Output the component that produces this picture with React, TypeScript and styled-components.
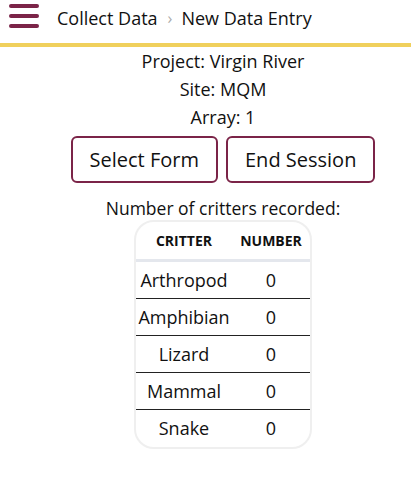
import styled, { createGlobalStyle } from "styled-components";

const GlobalStyle = createGlobalStyle`
  body {
    margin: 0;
    font-family: "Open Sans", "Noto Sans", sans-serif;
    color: #111;
    background: #fff;
  }
`;

const critters = [
  { name: "Arthropod", count: 0 },
  { name: "Amphibian", count: 0 },
  { name: "Lizard", count: 0 },
  { name: "Mammal", count: 0 },
  { name: "Snake", count: 0 },
];

export default function App() {
  return (
    <>
      <GlobalStyle />
      <Header>
        <MenuButton aria-label="menu">
          <span />
          <span />
          <span />
        </MenuButton>
        <Crumbs>
          <span>Collect Data</span>
          <Chevron>›</Chevron>
          <span>New Data Entry</span>
        </Crumbs>
      </Header>
      <Main>
        <InfoLine>Project: Virgin River</InfoLine>
        <InfoLine>Site: MQM</InfoLine>
        <InfoLine>Array: 1</InfoLine>
        <ButtonRow>
          <OutlineButton>Select Form</OutlineButton>
          <OutlineButton>End Session</OutlineButton>
        </ButtonRow>
        <Caption>Number of critters recorded:</Caption>
        <TableCard>
          <Table>
            <colgroup>
              <col style={{ width: 96 }} />
              <col />
            </colgroup>
            <thead>
              <tr>
                <Th>Critter</Th>
                <Th>Number</Th>
              </tr>
            </thead>
            <tbody>
              {critters.map((c, i) => (
                <Row key={c.name} $last={i === critters.length - 1}>
                  <Td>{c.name}</Td>
                  <Td>{c.count}</Td>
                </Row>
              ))}
            </tbody>
          </Table>
        </TableCard>
      </Main>
    </>
  );
}

const Header = styled.header`
  display: flex;
  align-items: center;
  height: 43px;
  border-bottom: 4px solid #f0d05c;
  padding-left: 9px;
  box-sizing: content-box;
`;

const MenuButton = styled.div`
  width: 30px;
  display: flex;
  flex-direction: column;
  gap: 6px;
  margin-top: -12px;

  span {
    display: block;
    height: 4px;
    border-radius: 2px;
    background: #7b2448;
  }
`;

const Crumbs = styled.div`
  display: flex;
  align-items: center;
  margin-left: 18px;
  margin-top: -7px;
  font-size: 18px;
  color: #111;
`;

const Chevron = styled.span`
  color: #aaa;
  font-size: 16px;
  margin: 0 9px 0 10px;
`;

const Main = styled.main`
  display: flex;
  flex-direction: column;
  align-items: center;
  padding-left: 35px;
`;

const InfoLine = styled.div`
  font-size: 18px;
  line-height: 28px;
`;

const ButtonRow = styled.div`
  display: flex;
  gap: 8px;
  margin-top: 5px;
`;

const OutlineButton = styled.button`
  font-family: inherit;
  font-size: 20px;
  color: #111;
  background: #fff;
  border: 2px solid #7b2448;
  border-radius: 6px;
  height: 47px;
  padding: 0 17px;
`;

const Caption = styled.div`
  font-size: 17.5px;
  margin-top: 14px;
  line-height: 23px;
`;

const TableCard = styled.div`
  border: 2px solid #efefef;
  border-radius: 20px;
  padding: 0 0 1px;
  width: 178px;
  box-sizing: border-box;
  overflow: hidden;
`;

const Table = styled.table`
  width: 100%;
  border-collapse: collapse;
  table-layout: fixed;
`;

const Th = styled.th`
  font-size: 14px;
  font-weight: 700;
  text-transform: uppercase;
  height: 37px;
  padding: 0;
  border-bottom: 3px solid #e4e7ed;
  vertical-align: middle;
`;

const Row = styled.tr<{ $last: boolean }>`
  border-bottom: ${(p) => (p.$last ? "none" : "1px solid #222")};
`;

const Td = styled.td`
  font-size: 18px;
  text-align: center;
  height: 36px;
  padding: 0;
`;
